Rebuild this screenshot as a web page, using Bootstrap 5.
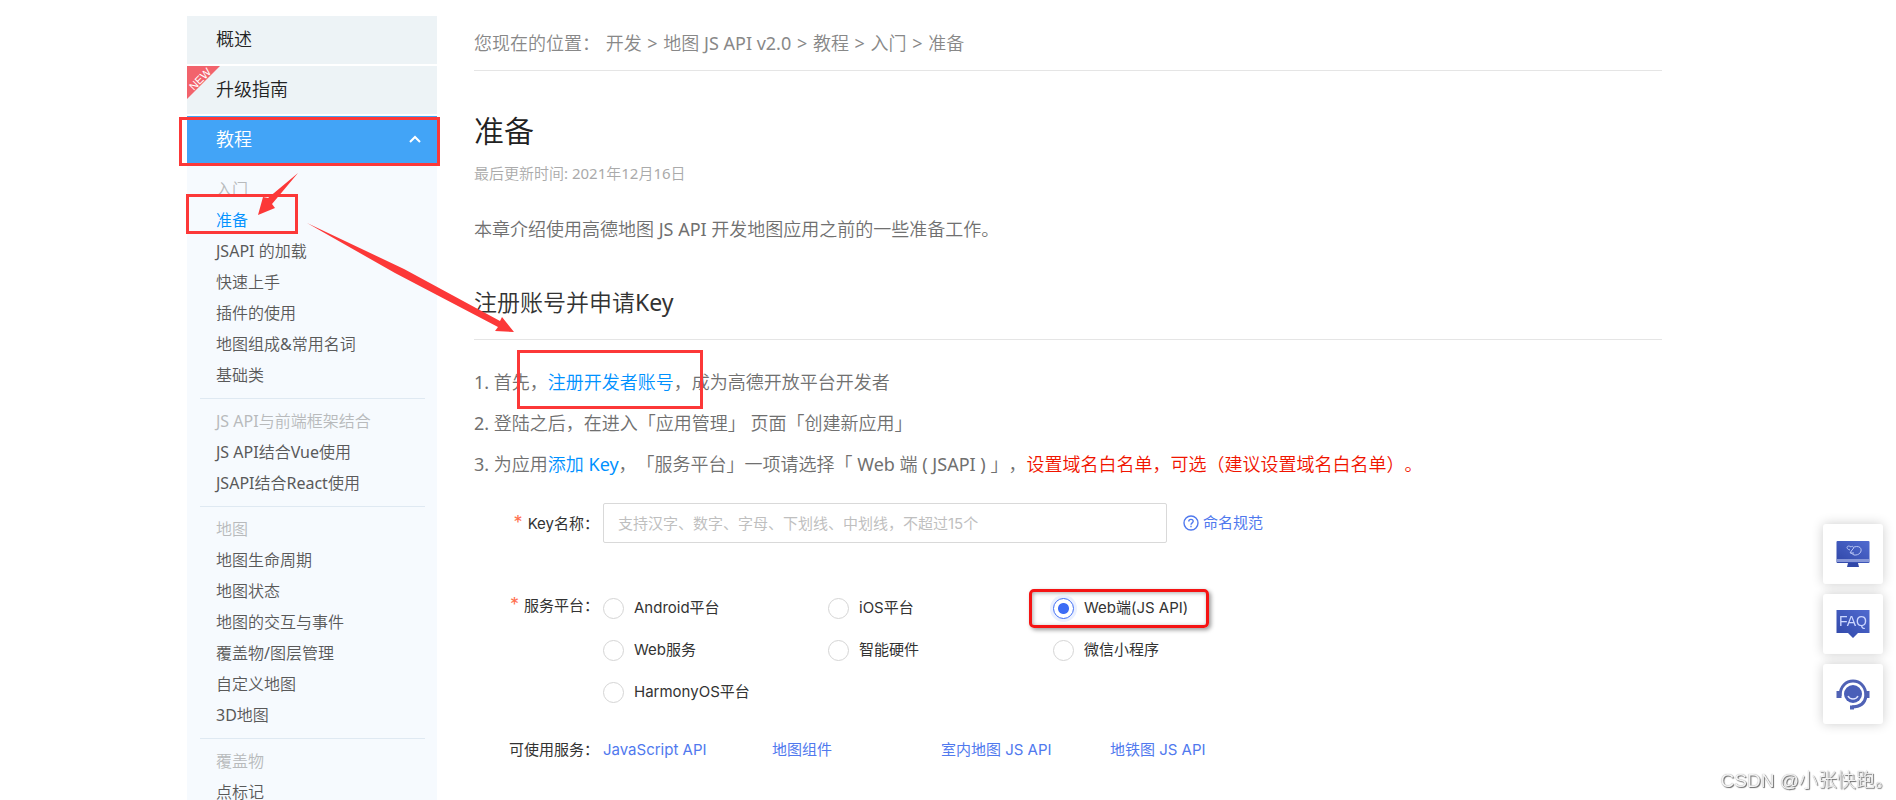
<!DOCTYPE html>
<html lang="zh-CN">
<head>
<meta charset="utf-8">
<meta name="viewport" content="width=device-width, initial-scale=1">
<title>准备 - 地图 JS API v2.0</title>
<link href="https://cdn.jsdelivr.net/npm/bootstrap@5.3.0/dist/css/bootstrap.min.css" rel="stylesheet">
<style>
  body { font-family: "Noto Sans", "Noto Sans CJK SC DemiLight", "Noto Sans CJK SC", sans-serif; font-size: 16px; font-weight: 400; color: #707070; text-spacing-trim: space-all; }
  a { text-decoration: none; color: #0091ff; }
  .shell { height: 100vh; padding: 16px 234px 0 187px; }
  .side { width: 250px; }
  .side-top { height: 48px; margin-bottom: 2px; padding: 0 16px 2px 29px; background: #edf3f6; color: #222; font-size: 18px; }
  .side-top.current { background: #42a4f7; color: #fff; margin: 0; }
  .ribbon { left: 0; top: 0; }
  .submenu { background: #f6fafe; padding: 9px 12px 0 13px; }
  .group { padding: 6px 0 7px 16px; border-bottom: 1px solid #dfe9f2; line-height: 31px; }
  .group:first-child { padding-top: 0; }
  .group h2 { font-size: 16px; line-height: 32px; color: #b8babc; margin: 0; font-weight: 400; }
  .group a { display: block; color: #595959; }
  .group a.on { color: #0091ff; }
  .doc { margin-left: 37px; }
  .crumbs { height: 55px; border-bottom: 1px solid #e5e5e5; color: #888; font-size: 18px; white-space: pre; }
  .crumbs a { color: #888; margin: 0 1px; }
  .doc h1 { font-size: 30px; line-height: 40px; margin: 40px 0 0; color: #222; font-weight: 400; }
  .updated { font-size: 15px; line-height: 20px; margin: 12px 0 0; color: #aaa; }
  .intro { font-size: 18px; line-height: 30px; margin: 31px 0 0; }
  .doc h3 { font-size: 23px; line-height: 36px; margin: 40px 0 0; padding-bottom: 19px; border-bottom: 1px solid #e5e5e5; color: #333; font-weight: 400; }
  .steps { font-size: 18px; line-height: 41px; margin: 22px 0 0; padding: 0; list-style: none; white-space: nowrap; }
  .warn { color: #f01400; }
  .keyform { font-family: Inter, "Noto Sans CJK SC", sans-serif; font-size: 15px; line-height: 20px; color: #333; font-weight: 400; margin-top: 18px; }
  .keyform a { color: #5079ee; }
  .cap { width: 129px; padding-right: 4px; text-align: right; flex: none; }
  .star { color: #ff7050; margin-right: 5px; font-size: 18px; }
  .keyname { width: 564px; height: 40px; padding: 0 14px; border: 1px solid #d9d9d9; border-radius: 2px; font-size: 15px; }
  .keyname::placeholder { color: #bfbfbf; opacity: 1; }
  .platforms { margin-top: 44px; }
  .platforms .cap { padding-top: 8px; }
  .opts { display: grid; grid-template-columns: repeat(3, 225px); grid-auto-rows: 42px; }
  .opt { display: flex; align-items: center; }
  .opt input { appearance: none; width: 21px; height: 21px; margin: 0 10px 0 0; border: 1px solid #d5d5d5; border-radius: 50%; background: #fff; }
  .opt input:checked { border-color: #3d6cf5; background: radial-gradient(circle, #3d6cf5 5px, #fff 6px); box-shadow: 0 0 0 3px #eaf0ff; }
  .picked { height: 39px; width: 180px; margin-left: -24px; padding-left: 21px; border: 3px solid #f51414; border-radius: 5px; box-shadow: 2px 2px 4px #0006, inset 1px 1px 4px #0005; align-self: center; }
  .services { margin-top: 27px; }
  .services .cap { white-space: nowrap; }
  .svc { display: grid; grid-template-columns: repeat(4, 169px); }
  .rail { position: fixed; right: 13px; bottom: 76px; gap: 10px; }
  .rail button { width: 60px; height: 60px; border: 0; border-radius: 3px; background: #fff; box-shadow: 0 0 12px #0003; padding: 0; }
  .sign { position: fixed; right: 2px; bottom: 5px; font: 300 19px/28px "Liberation Sans", "Noto Sans CJK SC", sans-serif; color: #f4f4f4; text-shadow: 1px 1px 1px #666, 0 0 1px #999; }
  .marks { position: absolute; left: 0; top: 0; pointer-events: none; }
</style>
</head>
<body class="overflow-hidden">
<div class="shell d-flex overflow-hidden">
  <nav class="side flex-shrink-0">
    <a class="side-top d-flex align-items-center" href="#">概述</a>
    <a class="side-top d-flex align-items-center position-relative" href="#">
      <svg class="ribbon position-absolute" width="34" height="34"><path d="M0 0H33L0 33Z" fill="#f2636c"/><text x="13" y="17" transform="rotate(-45 13 13)" text-anchor="middle" font-family="Liberation Sans" font-size="11" font-weight="400" fill="#fff">NEW</text></svg>
      升级指南
    </a>
    <a class="side-top current d-flex align-items-center justify-content-between" href="#">教程
      <svg width="12" height="8" viewBox="0 0 12 8" fill="none" stroke="#fff" stroke-width="2"><path d="M1 7L6 2L11 7"/></svg>
    </a>
    <div class="submenu">
      <div class="group"><h2>入门</h2><a class="on" href="#">准备</a><a href="#">JSAPI 的加载</a><a href="#">快速上手</a><a href="#">插件的使用</a><a href="#">地图组成&amp;常用名词</a><a href="#">基础类</a></div>
      <div class="group"><h2>JS API与前端框架结合</h2><a href="#">JS API结合Vue使用</a><a href="#">JSAPI结合React使用</a></div>
      <div class="group"><h2>地图</h2><a href="#">地图生命周期</a><a href="#">地图状态</a><a href="#">地图的交互与事件</a><a href="#">覆盖物/图层管理</a><a href="#">自定义地图</a><a href="#">3D地图</a></div>
      <div class="group"><h2>覆盖物</h2><a href="#">点标记</a></div>
    </div>
  </nav>
  <main class="doc flex-grow-1">
    <div class="crumbs d-flex align-items-center"><span>您现在的位置：</span><span> <a href="#">开发</a> &gt; <a href="#">地图 JS API v2.0</a> &gt; <a href="#">教程</a> &gt; <a href="#">入门</a> &gt; <a href="#">准备</a></span></div>
    <h1>准备</h1>
    <p class="updated">最后更新时间: 2021年12月16日</p>
    <p class="intro">本章介绍使用高德地图 JS API 开发地图应用之前的一些准备工作。</p>
    <h3>注册账号并申请Key</h3>
    <ol class="steps">
      <li>1. 首先，<a href="#">注册开发者账号</a>，成为高德开放平台开发者</li>
      <li>2. 登陆之后，在进入「应用管理」 页面「创建新应用」</li>
      <li>3. 为应用<a href="#">添加 Key</a>，「服务平台」一项请选择「 Web 端 ( JSAPI ) 」，<span class="warn">设置域名白名单，可选（建议设置域名白名单）。</span></li>
    </ol>
    <form class="keyform">
      <div class="d-flex align-items-center">
        <label class="cap" for="keyname"><span class="star">*</span>Key名称：</label>
        <input class="keyname" id="keyname" type="text" placeholder="支持汉字、数字、字母、下划线、中划线，不超过15个">
        <a class="d-flex align-items-center ms-3" href="#"><svg class="me-1" width="16" height="16" viewBox="0 0 16 16" fill="none" stroke="#5079ee" stroke-width="1.4"><circle cx="8" cy="8" r="7"/><path d="M5.8 6.5C5.8 3.6 10.2 3.7 10.2 6.3C10.2 7.9 8 7.8 8 9.7M8 10.8V12.2"/></svg>命名规范</a>
      </div>
      <div class="platforms d-flex">
        <div class="cap"><span class="star">*</span>服务平台：</div>
        <div class="opts">
          <label class="opt"><input type="radio" name="platform">Android平台</label>
          <label class="opt"><input type="radio" name="platform">iOS平台</label>
          <label class="opt picked"><input type="radio" name="platform" checked>Web端(JS API)</label>
          <label class="opt"><input type="radio" name="platform">Web服务</label>
          <label class="opt"><input type="radio" name="platform">智能硬件</label>
          <label class="opt"><input type="radio" name="platform">微信小程序</label>
          <label class="opt"><input type="radio" name="platform">HarmonyOS平台</label>
        </div>
      </div>
      <div class="services d-flex">
        <div class="cap">可使用服务：</div>
        <div class="svc"><a href="#">JavaScript API</a><a href="#">地图组件</a><a href="#">室内地图 JS API</a><a href="#">地铁图 JS API</a></div>
      </div>
    </form>
  </main>
</div>

<!-- tutorial callouts drawn over the page -->
<svg class="marks" width="720" height="420" fill="none" stroke="#fc3838" stroke-width="3">
  <path d="M180.500 118.500H438.500V164.500H180.500ZM187.500 195.500H296.500V232.500H187.500ZM518.500 351.500H701.500V407.500H518.500Z"/>
  <path fill="#fc3838" stroke="none" d="M298 173L272 204L275 208L258 215L263 197L268 198ZM307 223L404 269L500 321L502 317L514 332L495 331L498 327L395 273Z"/>
</svg>

<div class="rail d-flex flex-column">
  <button type="button" aria-label="控制台"><svg width="34" height="30" viewBox="0 0 34 30"><defs><linearGradient id="ink" x1="0" y1="1" x2="1" y2="0"><stop stop-color="#3047a8"/><stop offset="1" stop-color="#506bd0"/></linearGradient></defs><rect x="0.500" y="2" width="33" height="22" rx="1" fill="url(#ink)"/><path d="M1 20H33V23H1Z" fill="#8797d8"/><path d="M12 24H22L23 28H11Z" fill="#3047a8"/><path d="M14 11C9 10 11 5 15 8C17 6 19 9 16 11L14 14H18M18 8C28 5 27 17 18 16L15 14" fill="none" stroke="#bac7f5"/></svg></button>
  <button type="button" aria-label="FAQ"><svg width="34" height="30" viewBox="0 0 34 30"><path d="M0.500 1H33.500V24H22L17 29L12 24H0.500Z" fill="url(#ink)"/><text x="17" y="17" text-anchor="middle" font-family="Liberation Sans" font-weight="400" font-size="14" fill="#ccd7ff">FAQ</text></svg></button>
  <button type="button" aria-label="客服"><svg width="34" height="32" viewBox="0 0 34 32" fill="none"><circle cx="17" cy="16" r="9" fill="#4a5fb8"/><path d="M4 18C4 -2 30 -2 30 18C29 25 24 29 16 29" stroke="#5062b5" stroke-width="3"/><path d="M3 13V20M31 13V20" stroke="#5062b5" stroke-width="5"/><path d="M14 29.500H18" stroke="#5062b5" stroke-width="4"/><path d="M12 18C14 22 20 22 22 18" stroke="#dfe4ff" stroke-width="1.500"/></svg></button>
</div>
<div class="sign">CSDN @小张快跑。</div>
<script src="https://cdn.jsdelivr.net/npm/bootstrap@5.3.0/dist/js/bootstrap.bundle.min.js"></script>
</body>
</html>
